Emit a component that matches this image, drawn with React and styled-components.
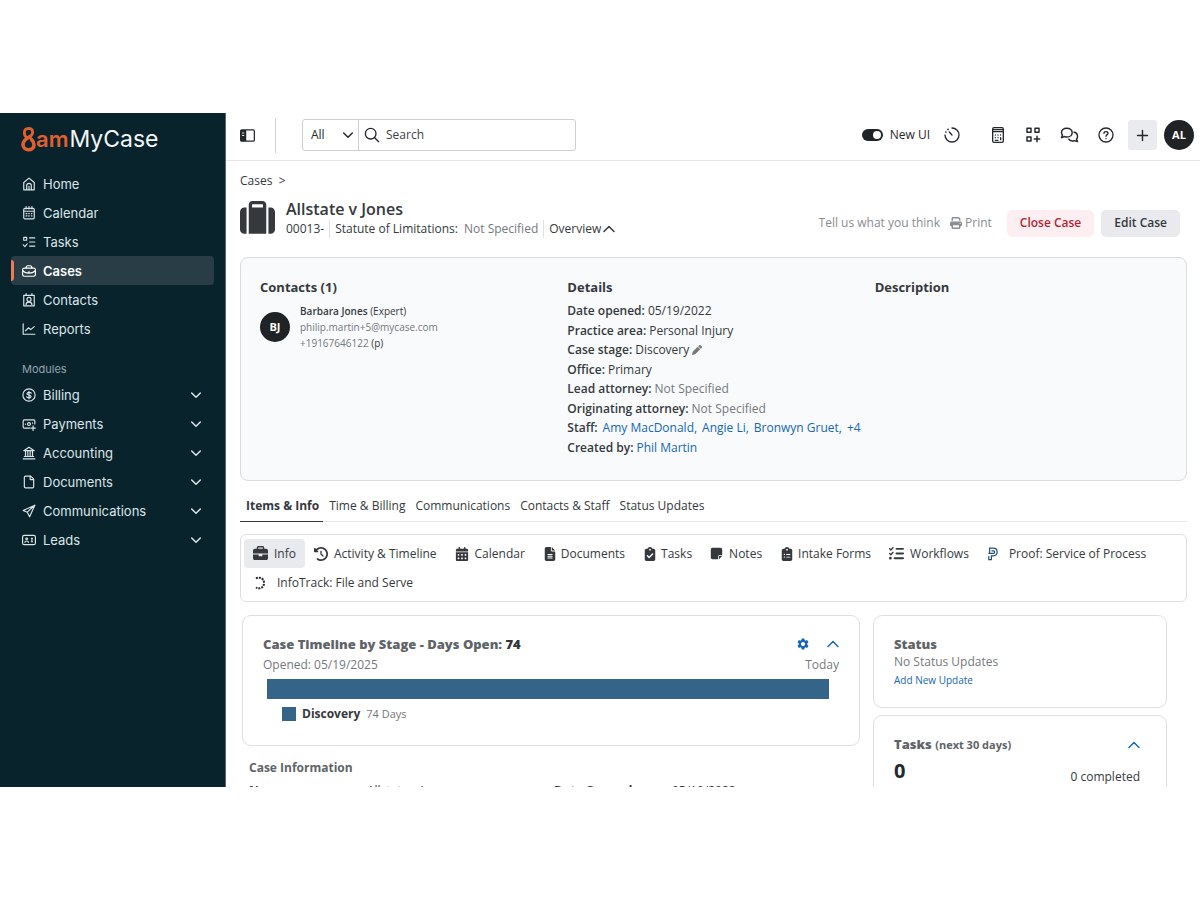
import styled, { createGlobalStyle } from 'styled-components';
import { File, Plus } from 'lucide-react';
import {
  FaSuitcase,
  FaPrint,
  FaPen,
  FaBriefcase,
  FaClockRotateLeft,
  FaCalendarDays,
  FaFileLines,
  FaClipboardCheck,
  FaNoteSticky,
  FaClipboardList,
  FaListCheck,
} from 'react-icons/fa6';
import { MdSettings } from 'react-icons/md';

const GlobalStyle = createGlobalStyle`
  * {
    box-sizing: border-box;
  }
  body {
    margin: 0;
    background: #fff;
    color: #35393d;
    font-family: 'Open Sans', 'Noto Sans', sans-serif;
    font-size: 12px;
    line-height: 16px;
  }
  button, input, select {
    font: inherit;
    color: inherit;
  }
  button {
    border: 0;
    padding: 0;
    background: none;
    cursor: pointer;
  }
  a {
    color: inherit;
    text-decoration: none;
  }
  h1, h2, h3, p, ul, dl, dd {
    margin: 0;
    padding: 0;
  }
  svg {
    flex: none;
    display: block;
  }
`;

const Page = styled.div`
  display: flex;
  height: 100vh;
  padding: 113px 0;
`;

// ---------- sidebar ----------
const Sidebar = styled.nav`
  flex: none;
  width: 226px;
  padding: 8px 11px;
  overflow: hidden;
  background: #09232d;
  border-right: 1px solid #56676e;
  color: #dce5e8;
  font-family: Inter, sans-serif;
  font-size: 13px;
`;

const Brand = styled.a`
  display: flex;
  align-items: center;
  height: 36px;
  margin-bottom: 12px;
  padding-left: 10px;
  color: #f2f6f7;
  font-size: 23px;
  line-height: 32px;
`;

const BrandAccent = styled.span`
  margin-right: 1px;
  color: #e2602f;
  font-size: 22px;
  font-weight: 600;
`;

const NavLink = styled.a`
  position: relative;
  display: flex;
  align-items: center;
  gap: 7px;
  height: 29px;
  padding: 0 12px 0 11px;
  border-radius: 4px;
  background: ${(props) => (props.$active ? '#293d47' : 'transparent')};
  color: ${(props) => (props.$active ? '#fff' : 'inherit')};
  font-weight: ${(props) => (props.$active ? 600 : 400)};

  &::before {
    content: '';
    display: ${(props) => (props.$active ? 'block' : 'none')};
    position: absolute;
    left: 0;
    top: 4px;
    bottom: 4px;
    width: 3px;
    border-radius: 0 3px 3px 0;
    background: #ef7b55;
  }
`;

const NavLabel = styled.span`
  flex: 1;
`;

const NavHeading = styled.h2`
  margin: 18px 0 3px;
  padding-left: 11px;
  color: #93a3aa;
  font-size: 11px;
  font-weight: 400;
  line-height: 16px;
`;

// ---------- top bar ----------
const Main = styled.main`
  flex: 1;
  min-width: 0;
  overflow: hidden;
`;

const TopBar = styled.header`
  display: flex;
  align-items: center;
  height: 48px;
  padding: 0 6px 3px 14px;
  border-bottom: 1px solid #e4e6e8;
  color: #24282b;
`;

const Divider = styled.span`
  width: 1px;
  height: 35px;
  margin: 0 26px 0 20px;
  background: #cfd2d5;
`;

const SearchBox = styled.div`
  display: flex;
  width: 274px;
  height: 32px;
  border: 1px solid #cdd0d3;
  border-radius: 3px;
`;

const Scope = styled.label`
  display: flex;
  align-items: center;
  width: 56px;
  padding-right: 4px;
  border-right: 1px solid #cdd0d3;
`;

const ScopeSelect = styled.select`
  flex: 1;
  min-width: 0;
  height: 30px;
  margin-right: -12px;
  padding: 0 12px 0 8px;
  border: 0;
  background: none;
  appearance: none;
`;

const SearchField = styled.label`
  flex: 1;
  display: flex;
  align-items: center;
  gap: 6px;
  padding-left: 5px;
`;

const SearchInput = styled.input`
  flex: 1;
  min-width: 0;
  padding: 0;
  border: 0;
  outline: 0;
  background: none;
  &::placeholder {
    color: #3c4145;
    opacity: 1;
  }
`;

const Tools = styled.div`
  display: flex;
  align-items: center;
  gap: 14px;
  margin-left: auto;
`;

const IconGroup = styled.div`
  display: flex;
  gap: 19px;
  margin-left: 16px;
`;

const SwitchLabel = styled.label`
  display: flex;
  align-items: center;
  gap: 7px;
`;

const Switch = styled.input`
  appearance: none;
  display: flex;
  justify-content: flex-end;
  width: 21px;
  height: 12px;
  margin: 0;
  padding: 2px;
  border-radius: 6px;
  background: #202427;
  &::after {
    content: '';
    width: 8px;
    height: 8px;
    border-radius: 4px;
    background: #fff;
  }
`;

const UserTools = styled.div`
  display: flex;
  gap: 7px;
`;

const AddButton = styled.button`
  display: grid;
  place-items: center;
  width: 29px;
  height: 30px;
  border-radius: 3px;
  background: #e9ebee;
`;

const Avatar = styled.span`
  flex: none;
  display: grid;
  place-items: center;
  width: 30px;
  height: 30px;
  border-radius: 50%;
  background: #1f2326;
  color: #fff;
  font-size: 11px;
  font-weight: 700;
`;

// ---------- case header ----------
const Content = styled.div`
  padding: 12px 13px 0 14px;
`;

const CaseHeader = styled.div`
  display: flex;
  align-items: center;
  gap: 11px;
  margin: 9px 0 19px;
`;

const CaseTitle = styled.h1`
  font-size: 16px;
  font-weight: 600;
  line-height: 22px;
`;

const CaseMeta = styled.div`
  display: flex;
  align-items: center;
  line-height: 18px;
`;

const MetaItem = styled.span`
  display: flex;
  align-items: center;
  gap: ${(props) => props.$gap || 6}px;
  & + & {
    margin-left: 5px;
    padding-left: 5px;
    border-left: 1px solid #dfe1e4;
  }
`;

const Muted = styled.span`
  color: #75797d;
`;

const CaseActions = styled.div`
  display: flex;
  align-items: center;
  margin: 10px 7px 0 auto;
  gap: 7px;
`;

const QuietButton = styled.button`
  display: flex;
  align-items: center;
  gap: 3px;
  margin-right: ${(props) => props.$after || 0}px;
  color: #8a8d91;
`;

const ActionButton = styled.button`
  height: 27px;
  padding: 0 13px;
  border-radius: 5px;
  background: ${(props) => (props.$danger ? '#fdeff1' : '#e8eaee')};
  color: ${(props) => (props.$danger ? '#b81f34' : '#35393d')};
  font-weight: 600;
`;

// ---------- overview ----------
const Overview = styled.section`
  display: grid;
  grid-template-columns: repeat(3, minmax(0, 1fr));
  gap: 15px;
  min-height: 224px;
  padding: 19px;
  border: 1px solid #d9dce0;
  border-radius: 8px;
  background: #f8fafc;
`;

const ColumnTitle = styled.h2`
  margin-bottom: 4px;
  font-size: 13px;
  font-weight: 700;
  line-height: 20px;
`;

const Contact = styled.div`
  display: flex;
  align-items: center;
  gap: 10px;
  padding-top: 2px;
  font-size: 10px;
`;

const Details = styled.div`
  white-space: nowrap;
`;

const Detail = styled.div`
  display: flex;
  align-items: center;
  gap: 3px;
  height: 20px;
  margin-bottom: ${(props) => (props.$tight ? -1 : 0)}px;
`;

const Label = styled.span`
  font-weight: 600;
`;

const Link = styled.a`
  color: #1767b3;
`;

const StaffList = styled.span`
  display: flex;
  gap: 5px;
  margin-left: 2px;
`;

// ---------- tabs ----------
const Tabs = styled.div`
  display: flex;
  margin-top: 10px;
  border-bottom: 1px solid #e6e8ea;
`;

const Tab = styled.button`
  height: 31px;
  margin-bottom: -1px;
  padding: 0 4px 0 6px;
  border-bottom: 1px solid ${(props) => (props.$active ? '#35393d' : 'transparent')};
  font-weight: ${(props) => (props.$active ? 700 : 400)};
`;

const SubNav = styled.div`
  display: flex;
  flex-wrap: wrap;
  margin-top: 12px;
  padding: 4px 3px;
  border: 1px solid #dcdfe2;
  border-radius: 6px;
`;

const SubNavItem = styled.button`
  display: flex;
  align-items: center;
  gap: ${(props) => props.$gap || 6}px;
  height: 29px;
  padding: 0 9px;
  border-radius: 4px;
  background: ${(props) => (props.$active ? '#e8eaee' : 'transparent')};
`;

// ---------- panels ----------
const Panels = styled.div`
  display: grid;
  grid-template-columns: 618fr 294fr;
  align-items: start;
  gap: 13px;
  margin: 13px 20px 0 2px;
`;

const Stack = styled.div`
  display: flex;
  flex-direction: column;
  gap: 7px;
`;

const Card = styled.section`
  min-height: ${(props) => props.$min}px;
  padding: 18px ${(props) => props.$right || 20}px 18px 20px;
  border: 1px solid #dcdfe2;
  border-radius: 9px;
`;

const CardHead = styled.div`
  display: flex;
  align-items: center;
  justify-content: space-between;
`;

const CardTitle = styled.h2`
  color: #5f6469;
  font-size: 13px;
  font-weight: 800;
  line-height: 20px;
`;

const Strong = styled.span`
  color: #33373b;
`;

const Small = styled.span`
  font-size: 11px;
  font-weight: 700;
`;

const HeadButtons = styled.div`
  display: flex;
  align-items: center;
  gap: 17px;
  color: #1767b3;
`;

const Range = styled.div`
  display: flex;
  justify-content: space-between;
  margin: 3px 0 6px;
  color: #75797d;
`;

const StageBar = styled.div`
  height: 20px;
  margin: 0 10px 0 4px;
  background: #346488;
`;

const Legend = styled.div`
  display: flex;
  align-items: center;
  gap: 6px;
  margin: 7px 0 0 19px;
`;

const Swatch = styled.span`
  width: 14px;
  height: 14px;
  background: #346488;
`;

const Days = styled.span`
  color: #75797d;
  font-size: 11px;
`;

const InfoTitle = styled.h2`
  margin: 14px 0 6px 7px;
  color: #5f6469;
  font-size: 12px;
  font-weight: 700;
  line-height: 16px;
`;

const InfoGrid = styled.dl`
  display: grid;
  grid-template-columns: 118px 187px 118px 1fr;
  margin-left: 7px;
  line-height: 18px;
  dt {
    font-weight: 700;
  }
`;

const CardLink = styled(Link)`
  display: block;
  margin-top: 2px;
  font-size: 10px;
`;

const Count = styled.span`
  color: #24282b;
  font-size: 20px;
  font-weight: 700;
  line-height: 28px;
`;

const TaskRow = styled.div`
  display: flex;
  align-items: flex-end;
  justify-content: space-between;
  padding-top: 2px;
`;

// ---------- drawings ----------
function Glyph({ size = 14, width = 2, children }) {
  return (
    <svg
      width={size}
      height={size}
      viewBox="0 0 24 24"
      fill="none"
      stroke="currentColor"
      strokeWidth={width}
      strokeLinecap="round"
      strokeLinejoin="round"
      aria-hidden="true"
    >
      {children}
    </svg>
  );
}

const Chevron = ({ down }) => (
  <svg width="12" height="12" viewBox="0 0 12 12" fill="none" stroke="currentColor" strokeWidth="1.500" strokeLinecap="round" strokeLinejoin="round" aria-hidden="true">
    <path d={down ? 'M1.700 4 6 8.200 10.300 4' : 'M1 8.500 6 3.500l5 5'} />
  </svg>
);

const HomeIcon = () => (
  <Glyph>
    <path d="M3 9.500 12 2l9 7.500V22H3zM8 22v-7a4 4 0 0 1 8 0v7M12 22v-6" />
  </Glyph>
);

const CalendarIcon = () => (
  <Glyph>
    <rect x="3" y="4" width="18" height="18" rx="2" />
    <path d="M7 1v4M12 1v4M17 1v4M3 9h18M7 13h1.500M11.500 13h1M16 13h1M7 17h1.500M11.500 17h1M16 17h1" />
  </Glyph>
);

const TasksIcon = () => (
  <Glyph>
    <path d="M3 4h5v5H3zM2 17l3 3 4-5M13 5h9M13 12h9M13 19h9" />
  </Glyph>
);

const CasesIcon = () => (
  <Glyph>
    <rect x="1" y="7" width="22" height="14" rx="3" />
    <path d="M7 7c0-3 1-4 3-4h4c2 0 3 1 3 4M1 11c4 6 18 6 22 0M12 13v1" />
  </Glyph>
);

const ContactsIcon = () => (
  <Glyph>
    <rect x="3" y="4" width="18" height="18" />
    <path d="M7 1v3M17 1v3M7 20c0-6 10-6 10 0" />
    <circle cx="12" cy="11" r="3.500" />
  </Glyph>
);

const ReportsIcon = () => (
  <Glyph>
    <path d="M2 3v18h20M6 15l5-5 4 3 6-5" />
  </Glyph>
);

const BillingIcon = () => (
  <Glyph>
    <circle cx="12" cy="12" r="10.500" />
    <path d="M16 9c-1-2-7-2.500-7.500.500S16 12 15.500 15 9 17 8 15M12 5.500v13" />
  </Glyph>
);

const PaymentsIcon = () => (
  <Glyph>
    <path d="M13 19H4a2 2 0 0 1-2-2V7a2 2 0 0 1 2-2h16a2 2 0 0 1 2 2v5M6 12v.500M18 10v.500M19 15v8M15 19h8" />
    <circle cx="12" cy="12" r="2.500" />
  </Glyph>
);

const AccountingIcon = () => (
  <Glyph>
    <path d="M2 22h20M4 18h16M3 8l9-6 9 6zM6 9v9M10 9v9M14 9v9M18 9v9" />
  </Glyph>
);

const SendIcon = () => (
  <Glyph>
    <path d="M22 2 2 11l7 3 4 8zM22 2 9 14" />
  </Glyph>
);

const LeadsIcon = () => (
  <Glyph>
    <rect x="1" y="4" width="22" height="16" rx="3" />
    <circle cx="8" cy="10" r="1.500" />
    <path d="M5 16c0-3 6-3 6 0M16 9h2M17 9v6M16 15h2" />
  </Glyph>
);

const PanelIcon = () => (
  <Glyph size={15}>
    <rect x="1" y="3" width="22" height="18" rx="2" />
    <path d="M2 4h7v16H2z" fill="currentColor" />
    <path d="M4 8h2M4 12h2" stroke="#fff" strokeWidth="1.500" />
  </Glyph>
);

const SearchIcon = () => (
  <Glyph size={16}>
    <circle cx="10" cy="10" r="8" />
    <path d="m16 16 6 6" />
  </Glyph>
);

const TimerIcon = () => (
  <Glyph size={16}>
    <path d="M12 1.500A10.500 10.500 0 1 1 1.500 12M12 12 8 7.500" />
    <path d="M2.800 7.500v.010M6 3.700v.010" strokeWidth="2.600" />
  </Glyph>
);

const CalculatorIcon = () => (
  <Glyph size={16}>
    <rect x="4" y="1" width="16" height="22" rx="2" />
    <path d="M4 7h16M4 4h16" />
    <path d="M8 12h.010M12 12h.010M16 12h.010M8 16h.010M12 16h.010M16 16v3M8 20h4" />
  </Glyph>
);

const AppsIcon = () => (
  <Glyph size={16} width={2.2}>
    <path d="M3 2h6v6H3zM15 2h6v6h-6zM3 15h6v6H3zM18 14v8M14 18h8" />
  </Glyph>
);

const ChatIcon = () => (
  <svg width="19" height="16" viewBox="0 0 28 24" fill="none" stroke="currentColor" strokeWidth="2.200" strokeLinejoin="round" aria-hidden="true">
    <path d="M10 2c5 0 8 3 8 6.500S15 15 10 15c-1.500 0-2.500-.200-3.500-.700L2 16l1.500-4C2.500 11 2 10 2 8.500 2 5 5 2 10 2z" />
    <path d="M20 8c4 0 6 3 6 6.500 0 1.500-.500 2.500-1.500 3.500l1.500 4-4.500-1.500c-4 1-7.500 0-9-3" />
  </svg>
);

const HelpIcon = () => (
  <Glyph size={16}>
    <circle cx="12" cy="12" r="10.500" />
    <path d="M9 9.500C9 6 15 6 15 9.500c0 2-3 2-3 4.500M12 17.500v.010" />
  </Glyph>
);

const ProofIcon = () => (
  <svg width="12" height="14" viewBox="0 0 12 14" fill="none" stroke="#245272" strokeWidth="1.200" aria-hidden="true">
    <path d="M2.600 6V1.200h3.600c5.200 0 5.200 7.600 0 7.600H4.400v3.800H1.800V9" />
    <path d="M1.500 6.300h5c1.600 0 1.600-2.500 0-2.500H4.500" />
  </svg>
);

const InfoTrackIcon = () => (
  <svg width="14" height="14" viewBox="0 0 14 14" fill="none" stroke="#24282b" aria-hidden="true">
    <path d="M3 2.500C6 .500 11 2 11 7s-5 6.500-8 4.500" strokeWidth="2" strokeDasharray="2 1" />
  </svg>
);

const BrandMark = () => (
  <svg width="15" height="26" viewBox="0 0 15 26" fill="none" stroke="#e2602f" strokeLinecap="round" aria-hidden="true">
    <path d="M6 11.500C2.500 10 2 2.500 7.500 2.300c5.500 0 5 6.200 1.500 8.200" strokeWidth="2.800" />
    <path d="M9 10.500c-3 2-7 3.500-7 8 0 7 11 7 11 .500 0-2.500-1-4-2.500-5.500" strokeWidth="3.600" />
  </svg>
);

const mainLinks = [
  { label: 'Home', Icon: HomeIcon },
  { label: 'Calendar', Icon: CalendarIcon },
  { label: 'Tasks', Icon: TasksIcon },
  { label: 'Cases', Icon: CasesIcon, active: true },
  { label: 'Contacts', Icon: ContactsIcon },
  { label: 'Reports', Icon: ReportsIcon },
];

const moduleLinks = [
  { label: 'Billing', Icon: BillingIcon },
  { label: 'Payments', Icon: PaymentsIcon },
  { label: 'Accounting', Icon: AccountingIcon },
  { label: 'Documents', Icon: () => <File size={14} /> },
  { label: 'Communications', Icon: SendIcon },
  { label: 'Leads', Icon: LeadsIcon },
];

const subNavItems = [
  { label: 'Info', icon: <FaBriefcase size={15} />, active: true },
  { label: 'Activity & Timeline', icon: <FaClockRotateLeft size={14} /> },
  { label: 'Calendar', icon: <FaCalendarDays size={14} /> },
  { label: 'Documents', icon: <FaFileLines size={14} />, gap: 4 },
  { label: 'Tasks', icon: <FaClipboardCheck size={14} />, gap: 4 },
  { label: 'Notes', icon: <FaNoteSticky size={13} /> },
  { label: 'Intake Forms', icon: <FaClipboardList size={14} />, gap: 4 },
  { label: 'Workflows', icon: <FaListCheck size={15} /> },
  { label: 'Proof: Service of Process', icon: <ProofIcon />, gap: 10 },
  { label: 'InfoTrack: File and Serve', icon: <InfoTrackIcon />, gap: 10 },
];

const tabs = ['Items & Info', 'Time & Billing', 'Communications', 'Contacts & Staff', 'Status Updates'];

function AppSidebar() {
  return (
    <Sidebar>
      <Brand href="#" aria-label="8am MyCase">
        <BrandMark />
        <BrandAccent>am</BrandAccent>MyCase
      </Brand>
      {mainLinks.map(({ label, Icon, active }) => (
        <NavLink key={label} href="#" $active={active}>
          <Icon />
          <NavLabel>{label}</NavLabel>
        </NavLink>
      ))}
      <NavHeading>Modules</NavHeading>
      {moduleLinks.map(({ label, Icon }) => (
        <NavLink key={label} href="#">
          <Icon />
          <NavLabel>{label}</NavLabel>
          <Chevron down />
        </NavLink>
      ))}
    </Sidebar>
  );
}

function AppTopBar() {
  return (
    <TopBar>
      <button aria-label="Toggle sidebar"><PanelIcon /></button>
      <Divider />
      <SearchBox>
        <Scope>
          <ScopeSelect aria-label="Search in">
            <option>All</option>
          </ScopeSelect>
          <Chevron down />
        </Scope>
        <SearchField>
          <SearchIcon />
          <SearchInput type="text" placeholder="Search" aria-label="Search" />
        </SearchField>
      </SearchBox>
      <Tools>
        <SwitchLabel>
          <Switch type="checkbox" defaultChecked />
          New UI
        </SwitchLabel>
        <button aria-label="Timer"><TimerIcon /></button>
        <IconGroup>
          <button aria-label="Calculator"><CalculatorIcon /></button>
          <button aria-label="Apps"><AppsIcon /></button>
          <button aria-label="Chat"><ChatIcon /></button>
          <button aria-label="Help"><HelpIcon /></button>
        </IconGroup>
        <UserTools>
          <AddButton aria-label="Add"><Plus size={17} /></AddButton>
          <Avatar>AL</Avatar>
        </UserTools>
      </Tools>
    </TopBar>
  );
}

function CaseOverview() {
  return (
    <Overview>
      <div>
        <ColumnTitle>Contacts (1)</ColumnTitle>
        <Contact>
          <Avatar>BJ</Avatar>
          <div>
            <p><Label>Barbara Jones</Label> (Expert)</p>
            <p><Muted>philip.martin+5@mycase.com</Muted></p>
            <p><Muted>+19167646122</Muted> (p)</p>
          </div>
        </Contact>
      </div>
      <Details>
        <ColumnTitle>Details</ColumnTitle>
        <Detail><Label>Date opened:</Label>05/19/2022</Detail>
        <Detail $tight><Label>Practice area:</Label>Personal Injury</Detail>
        <Detail><Label>Case stage:</Label>Discovery <FaPen size={10} color="#75797d" /></Detail>
        <Detail $tight><Label>Office:</Label>Primary</Detail>
        <Detail><Label>Lead attorney:</Label><Muted>Not Specified</Muted></Detail>
        <Detail $tight><Label>Originating attorney:</Label><Muted>Not Specified</Muted></Detail>
        <Detail>
          <Label>Staff:</Label>
          <StaffList>
            <Link href="#">Amy MacDonald,</Link>
            <Link href="#">Angie Li,</Link>
            <Link href="#">Bronwyn Gruet,</Link>
            <Link href="#">+4</Link>
          </StaffList>
        </Detail>
        <Detail><Label>Created by:</Label><Link href="#">Phil Martin</Link></Detail>
      </Details>
      <div>
        <ColumnTitle>Description</ColumnTitle>
      </div>
    </Overview>
  );
}

function CasePanels() {
  return (
    <Panels>
      <div>
        <Card $min={131}>
          <CardHead>
            <CardTitle>Case Timeline by Stage - Days Open: <Strong>74</Strong></CardTitle>
            <HeadButtons>
              <button aria-label="Timeline settings"><MdSettings size={14} /></button>
              <button aria-label="Collapse timeline"><Chevron /></button>
            </HeadButtons>
          </CardHead>
          <Range>
            <span>Opened: 05/19/2025</span>
            <span>Today</span>
          </Range>
          <StageBar />
          <Legend>
            <Swatch />
            <b>Discovery</b>
            <Days>74 Days</Days>
          </Legend>
        </Card>
        <InfoTitle>Case Information</InfoTitle>
        <InfoGrid>
          <dt>Name</dt>
          <dd>Allstate v Jones</dd>
          <dt>Date Opened</dt>
          <dd>05/19/2022</dd>
        </InfoGrid>
      </div>
      <Stack>
        <Card $min={93}>
          <CardTitle>Status</CardTitle>
          <Muted>No Status Updates</Muted>
          <CardLink href="#">Add New Update</CardLink>
        </Card>
        <Card $min={93} $right={26}>
          <CardHead>
            <CardTitle>Tasks <Small>(next 30 days)</Small></CardTitle>
            <HeadButtons>
              <button aria-label="Collapse tasks"><Chevron /></button>
            </HeadButtons>
          </CardHead>
          <TaskRow>
            <Count>0</Count>
            <span>0 completed</span>
          </TaskRow>
        </Card>
      </Stack>
    </Panels>
  );
}

export default function App() {
  return (
    <Page>
      <GlobalStyle />
      <AppSidebar />
      <Main>
        <AppTopBar />
        <Content>
          <a href="#">Cases&nbsp; &gt;</a>
          <CaseHeader>
            <FaSuitcase size={35} />
            <div>
              <CaseTitle>Allstate v Jones</CaseTitle>
              <CaseMeta>
                <MetaItem>00013-</MetaItem>
                <MetaItem>Statute of Limitations: <Muted>Not Specified</Muted></MetaItem>
                <MetaItem $gap={2}>Overview <Chevron /></MetaItem>
              </CaseMeta>
            </div>
            <CaseActions>
              <QuietButton $after={3}>Tell us what you think</QuietButton>
              <QuietButton $after={8}><FaPrint size={12} />Print</QuietButton>
              <ActionButton $danger>Close Case</ActionButton>
              <ActionButton>Edit Case</ActionButton>
            </CaseActions>
          </CaseHeader>
          <CaseOverview />
          <Tabs role="tablist">
            {tabs.map((label, i) => (
              <Tab key={label} role="tab" aria-selected={i === 0} $active={i === 0}>{label}</Tab>
            ))}
          </Tabs>
          <SubNav>
            {subNavItems.map(({ label, icon, active, gap }) => (
              <SubNavItem key={label} $active={active} $gap={gap}>
                {icon}
                {label}
              </SubNavItem>
            ))}
          </SubNav>
          <CasePanels />
        </Content>
      </Main>
    </Page>
  );
}
